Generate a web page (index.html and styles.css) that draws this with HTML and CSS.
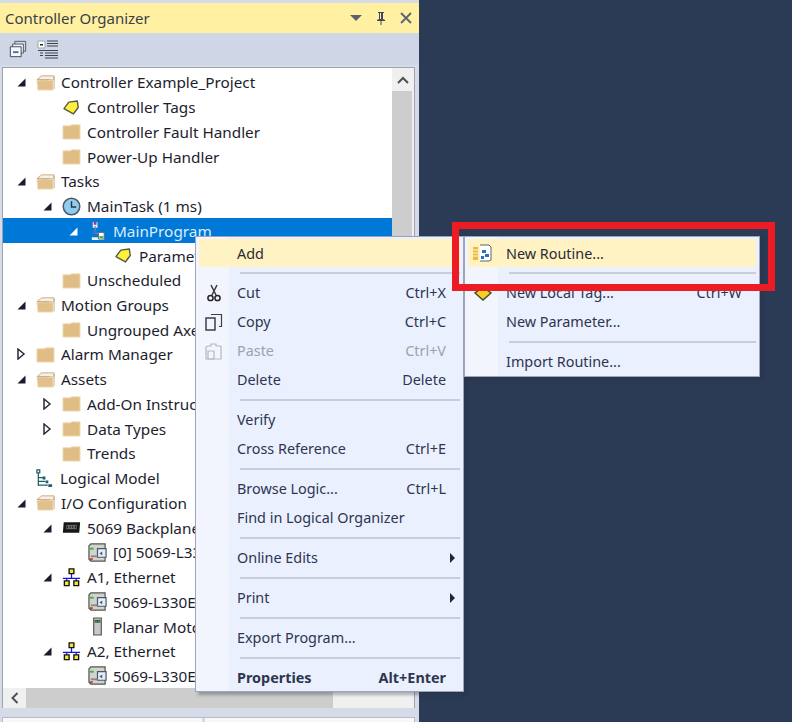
FILE: index.html
```html
<!DOCTYPE html>
<html lang="en">
<head>
<meta charset="utf-8">
<title>Controller Organizer</title>
<link rel="stylesheet" href="styles.css">
</head>
<body>
<svg class="defs" width="0" height="0" aria-hidden="true">
  <defs>
    <symbol id="folder" viewBox="0 0 20 20"><path d="M1 4h8l1-1h9v15H1z" fill="#e0bd85" stroke="#f0dcb8" stroke-width="1"/></symbol>
    <symbol id="folder-open" viewBox="0 0 20 20"><path d="M1 7l5-4h13v4z" fill="#f6f1e8" stroke="#c9ab7c"/><path d="M19 4v13" stroke="#b9a98c" fill="none"/><path d="M1 8h12l5-1v11H2z" fill="#e2c08b" stroke="#efdcba"/><path d="M1 7c5 0 9 1 13 0" stroke="#c9ab7c" fill="none"/></symbol>
    <symbol id="tag" viewBox="0 0 20 20"><path d="M2 10l6-6h9v7l-6 6z" transform="rotate(-8 10 10)" fill="#fff03c" stroke="#5a5a48" stroke-width="1.5" stroke-linejoin="round"/></symbol>
    <symbol id="clock" viewBox="0 0 20 20"><circle cx="10" cy="10" r="8.7" fill="#8fcdf0" stroke="#4e5a66" stroke-width="1.6"/><path d="M10 4.5V10.500H15" fill="none" stroke="#2b3440" stroke-width="1.500"/></symbol>
    <symbol id="program" viewBox="0 0 20 20"><path d="M5 1h5v6H5zM4 17h13v3H4z" fill="#eef2f6"/><path d="M6 1h3v3H6z" fill="#a03a90"/><path d="M7.500 5v8h5" fill="none" stroke="#7a8a9a" stroke-width="1.300"/><path d="M4 10h4v4H4z" fill="#2b74c8"/><path d="M11 12h6v7h-6z" fill="#fff" stroke="#5c6a70"/><path d="M12 16h4v2h-4z" fill="#3aa84a"/></symbol>
    <symbol id="network" viewBox="0 0 20 20"><path d="M10 6v5M1 11h18M5 11v3M15 11v3" stroke="#1414e0" stroke-width="1.300" fill="none"/><path d="M7.500 1h5v5h-5zM2.500 13.500h5v5h-5zM12.500 13.500h5v5h-5z" fill="#f5e83a" stroke="#111" stroke-width="1.400"/></symbol>
    <symbol id="backplane" viewBox="0 0 22 14"><path d="M2 1h19l-1 12H1z" fill="#161616"/><path d="M5 4h12v5H5z" fill="#6d6d6d"/><path d="M6 5h1v3H6zM9 5h1v3H9zM12 5h1v3h-1zM15 5h1v3h-1z" fill="#111"/></symbol>
    <symbol id="module" viewBox="0 0 20 20"><path d="M1 3l2-2h15v18H3l-2-2z" fill="#d2d2d0" stroke="#55554f" stroke-width="1.300"/><path d="M2 5h4v2H2z" fill="#2fc030"/><path d="M2 16h3v2H2z" fill="#d83a20"/><path d="M10 6h9v9h-9z" fill="#e8eef6" stroke="#4f5a60" stroke-width="1.300"/><path d="M15 9l-3 2 3 2z" fill="#3658a8"/><path d="M3 13h7v2H3z" fill="#8a8a88"/></symbol>
    <symbol id="drive" viewBox="0 0 10 20"><path d="M1 1h8v18H1z" fill="#c8c8c6" stroke="#55554f" stroke-width="1.200"/><path d="M2 3h6v3H2z" fill="#2f5a46"/><path d="M3 4h1v1H3zM6 4h1v1H6z" fill="#5fe060"/></symbol>
    <symbol id="open" viewBox="0 0 10 10"><path d="M9.500 1.500V9.500H1.500z"/></symbol>
    <symbol id="closed" viewBox="0 0 10 12"><path d="M2 1l6 5-6 5z" fill="none" stroke="#2a2a3a" stroke-width="1.500"/></symbol>
  </defs>
</svg>

<section class="organizer">
  <header class="titlebar">
    <h1>Controller Organizer</h1>
    <div class="window-tools">
      <svg class="tool-icon" viewBox="0 0 14 14"><path d="M1 4h12L7 10z" fill="#5b6270"/></svg>
      <svg class="tool-icon" viewBox="0 0 14 14"><path d="M4 1h6v1H9v6l2 1v1H7.500v4h-1v-4H3V9l2-1V2H4zM6 2v6h1V2z" fill="#40485a"/></svg>
      <svg class="tool-icon" viewBox="0 0 14 14"><path d="M2 2l10 10M12 2L2 12" stroke="#5b6270" stroke-width="1.800" fill="none"/></svg>
    </div>
  </header>
  <div class="toolbar">
    <svg class="bar-icon" viewBox="0 0 20 20"><path d="M6.500 4.500V1.500h12v11h-3" fill="none" stroke="#4a4f5c"/><path d="M4 7.500V4.500h12v10h-3" fill="#eef1f6" stroke="#4a4f5c"/><path d="M1.500 7.500h12v11h-12z" fill="#f4f6fa" stroke="#3a3f4c"/><path d="M4.500 12.500h6v2h-6z" fill="#3a6ea8"/></svg>
    <svg class="bar-icon wide" viewBox="0 0 22 20"><path d="M1 2h7v7H1z" fill="#fff" stroke="#9aa" /><path d="M3 5h3v1.500H3z" fill="#223"/><path d="M10 2h11M10 4.500h11M10 7h11M1 11.500h20M8 14h13M8 16.500h13M8 19h13M3 14h3M3 16.500h3" stroke="#3e4350" fill="none"/></svg>
  </div>

  <div class="tree-frame">
    <div class="tree-view">
      <ul class="tree">
        <li class="node l0"><svg class="twist"><use href="#open"/></svg><svg class="ico"><use href="#folder-open"/></svg><span>Controller Example_Project</span></li>
        <li class="node l1 leaf"><svg class="ico"><use href="#tag"/></svg><span>Controller Tags</span></li>
        <li class="node l1 leaf"><svg class="ico"><use href="#folder"/></svg><span>Controller Fault Handler</span></li>
        <li class="node l1 leaf"><svg class="ico"><use href="#folder"/></svg><span>Power-Up Handler</span></li>
        <li class="node l0"><svg class="twist"><use href="#open"/></svg><svg class="ico"><use href="#folder-open"/></svg><span>Tasks</span></li>
        <li class="node l1"><svg class="twist"><use href="#open"/></svg><svg class="ico"><use href="#clock"/></svg><span>MainTask (1 ms)</span></li>
        <li class="node l2 selected"><svg class="twist"><use href="#open"/></svg><svg class="ico"><use href="#program"/></svg><span>MainProgram</span></li>
        <li class="node l3 leaf"><svg class="ico"><use href="#tag"/></svg><span>Parameters</span></li>
        <li class="node l1 leaf"><svg class="ico"><use href="#folder"/></svg><span>Unscheduled</span></li>
        <li class="node l0"><svg class="twist"><use href="#open"/></svg><svg class="ico"><use href="#folder-open"/></svg><span>Motion Groups</span></li>
        <li class="node l1 leaf"><svg class="ico"><use href="#folder"/></svg><span>Ungrouped Axes</span></li>
        <li class="node l0"><svg class="twist shut"><use href="#closed"/></svg><svg class="ico"><use href="#folder"/></svg><span>Alarm Manager</span></li>
        <li class="node l0"><svg class="twist"><use href="#open"/></svg><svg class="ico"><use href="#folder-open"/></svg><span>Assets</span></li>
        <li class="node l1"><svg class="twist shut"><use href="#closed"/></svg><svg class="ico"><use href="#folder"/></svg><span>Add-On Instructions</span></li>
        <li class="node l1"><svg class="twist shut"><use href="#closed"/></svg><svg class="ico"><use href="#folder"/></svg><span>Data Types</span></li>
        <li class="node l1 leaf"><svg class="ico"><use href="#folder"/></svg><span>Trends</span></li>
        <li class="node l0 leaf"><svg class="ico" viewBox="0 0 20 20"><path d="M2 1h3v3H2zM3.500 4v14M3.500 9h5M3.500 13h7M3.500 17h10" stroke="#1f5f6a" stroke-width="1.300" fill="none"/><path d="M8 8h3v3H8zM11 12h3v3h-3zM14 16h4v3h-4z" fill="#1f5f6a"/></svg><span>Logical Model</span></li>
        <li class="node l0"><svg class="twist"><use href="#open"/></svg><svg class="ico"><use href="#folder-open"/></svg><span>I/O Configuration</span></li>
        <li class="node l1"><svg class="twist"><use href="#open"/></svg><svg class="ico"><use href="#backplane"/></svg><span>5069 Backplane</span></li>
        <li class="node l2 leaf"><svg class="ico"><use href="#module"/></svg><span>[0] 5069-L330ERMS2</span></li>
        <li class="node l1"><svg class="twist"><use href="#open"/></svg><svg class="ico"><use href="#network"/></svg><span>A1, Ethernet</span></li>
        <li class="node l2 leaf"><svg class="ico"><use href="#module"/></svg><span>5069-L330ERMS2</span></li>
        <li class="node l2 leaf"><svg class="ico"><use href="#drive"/></svg><span>Planar Motor</span></li>
        <li class="node l1"><svg class="twist"><use href="#open"/></svg><svg class="ico"><use href="#network"/></svg><span>A2, Ethernet</span></li>
        <li class="node l2 leaf"><svg class="ico"><use href="#module"/></svg><span>5069-L330ERMS2</span></li>
      </ul>
      <div class="vscroll">
        <button class="sbtn" type="button"><svg viewBox="0 0 12 8"><path d="M1 7l5-5 5 5" fill="none" stroke="#505050" stroke-width="2"/></svg></button>
        <div class="vthumb"></div>
      </div>
    </div>
    <div class="hscroll">
      <button class="sbtn" type="button"><svg viewBox="0 0 8 12"><path d="M7 1L2 6l5 5" fill="none" stroke="#505050" stroke-width="2"/></svg></button>
      <div class="hthumb"></div>
    </div>
  </div>

  <div class="description">
    <div class="desc-label">Description</div>
    <div class="desc-value"></div>
  </div>
</section>

<nav class="menu main-menu">
  <div class="item hot"><span>Add</span></div>
  <hr>
  <div class="item"><svg class="micon" viewBox="0 0 16 18"><path d="M5 1l5 10M11 1L6 11" stroke="#3a3a3a" stroke-width="1.500" fill="none"/><circle cx="4.500" cy="14" r="2.600" fill="none" stroke="#222" stroke-width="1.500"/><circle cx="11.500" cy="14" r="2.600" fill="none" stroke="#222" stroke-width="1.500"/></svg><span>Cut</span><kbd>Ctrl+X</kbd></div>
  <div class="item"><svg class="micon" viewBox="0 0 18 18"><path d="M6 1.500h10.500v12H14" fill="none" stroke="#3a3f4c" stroke-width="1.200"/><path d="M1 5h9v12H1z" fill="none" stroke="#3a3f4c" stroke-width="1.500"/></svg><span>Copy</span><kbd>Ctrl+C</kbd></div>
  <div class="item off"><svg class="micon" viewBox="0 0 18 18"><path d="M3 4h3V2h5v2h5v13H1V5z" fill="none" stroke="#b4b8c0" stroke-width="1.200"/><path d="M3 9h6v8H3z" fill="none" stroke="#b4b8c0" stroke-width="1.200"/></svg><span>Paste</span><kbd>Ctrl+V</kbd></div>
  <div class="item"><span>Delete</span><kbd>Delete</kbd></div>
  <hr>
  <div class="item"><span>Verify</span></div>
  <div class="item"><span>Cross Reference</span><kbd>Ctrl+E</kbd></div>
  <hr>
  <div class="item"><span>Browse Logic...</span><kbd>Ctrl+L</kbd></div>
  <div class="item"><span>Find in Logical Organizer</span></div>
  <hr>
  <div class="item"><span>Online Edits</span><i class="arrow"></i></div>
  <hr>
  <div class="item"><span>Print</span><i class="arrow"></i></div>
  <hr>
  <div class="item"><span>Export Program...</span></div>
  <hr>
  <div class="item strong"><span>Properties</span><kbd>Alt+Enter</kbd></div>
</nav>

<nav class="menu sub-menu">
  <div class="item hot"><svg class="micon routine" viewBox="0 0 22 20"><path d="M2 4h5v13H2z" fill="#f0b83c"/><path d="M2 7h5M2 10h5M2 13h5" stroke="#fff4d8"/><path d="M9 2h9l2 2v13l-2 1H9" fill="#fff" stroke="#5a6270"/><path d="M11 7h4v3h-4zM14 11h4v3h-4zM10 13h3v3h-3z" fill="#2a6ebc"/></svg><span>New Routine...</span></div>
  <hr>
  <div class="item"><svg class="micon" viewBox="0 0 18 18"><path d="M9 3l8 6-8 7-8-7z" fill="#f5d020" stroke="#4a4636" stroke-width="1.500"/></svg><span>New Local Tag...</span><kbd>Ctrl+W</kbd></div>
  <div class="item"><span>New Parameter...</span></div>
  <hr>
  <div class="item"><span>Import Routine...</span></div>
</nav>

<div class="callout"></div>
</body>
</html>
```
FILE: styles.css
```css
* { box-sizing: border-box; }
html, body { margin: 0; height: 100%; }
body {
  position: relative;
  height: 722px;
  overflow: hidden;
  background: #2b3a55;
  font-family: "Noto Sans", "Open Sans", sans-serif;
  color: #1d1d2e;
}
.defs { position: absolute; }

.organizer {
  width: 419px;
  height: 722px;
  display: flex;
  flex-direction: column;
  background: #d6dbe8;
  padding-top: 3px;
  overflow: hidden;
}
.titlebar {
  flex: 0 0 30px;
  display: flex;
  align-items: center;
  justify-content: space-between;
  padding: 0 6px 0 5px;
  background: #fff0a2;
}
.titlebar h1 {
  margin: 0;
  font-size: 15px;
  font-weight: 400;
  color: #3a4048;
}
.window-tools { display: flex; gap: 11px; align-items: center; }
.tool-icon { width: 14px; height: 14px; }
.toolbar {
  flex: 0 0 32px;
  display: flex;
  align-items: center;
  gap: 10px;
  padding: 0 0 0 9px;
  background: #cfd6e5;
}
.bar-icon { width: 18px; height: 18px; }
.bar-icon.wide { width: 22px; height: 20px; }

.tree-frame {
  margin: 2px 4px 0 2px;
  flex: 0 0 630px;
  display: flex;
  flex-direction: column;
  border: 1px solid #9fa4ac;
  border-bottom: 0;
  background: #fff;
}
.tree-view { flex: 1; display: flex; min-height: 0; overflow: hidden; }
.tree {
  flex: 1;
  min-width: 0;
  margin: 0;
  padding: 2px 0 0;
  list-style: none;
  overflow: hidden;
  background: #fff;
}
.node {
  height: 24.74px;
  display: flex;
  align-items: center;
  font-size: 15.3px;
  white-space: nowrap;
  color: #1d1d2e;
}
.node .twist { flex: 0 0 10px; width: 10px; height: 10px; margin-right: 10px; fill: #1a1a30; }
.node .twist.shut { height: 12px; }
.node .ico { flex: 0 0 19px; width: 19px; height: 19px; margin-right: 6px; }
.l0 { padding-left: 13px; }
.l1 { padding-left: 39px; }
.l2 { padding-left: 65px; }
.l3 { padding-left: 91px; }
.leaf { padding-left: 32px; }
.l1.leaf { padding-left: 59px; }
.l2.leaf { padding-left: 85px; }
.l3.leaf { padding-left: 111px; }
.selected { background: #0078d7; color: #dcecfb; }
.selected .twist { fill: #fff; }

.vscroll { flex: 0 0 22px; margin-right: 0; background: #f0f0f0; display: flex; flex-direction: column; }
.vthumb { flex: 1; margin: 0 2px 0 0; background: #cdcdcd; }
.sbtn { display: flex; align-items: center; justify-content: center; padding: 0; border: 0; background: #f0f0f0; }
.vscroll .sbtn { flex: 0 0 23px; }
.vscroll .sbtn svg { width: 12px; height: 8px; }
.hscroll { flex: 0 0 20px; display: flex; background: #f0f0f0; }
.hscroll .sbtn { flex: 0 0 23px; }
.hscroll .sbtn svg { width: 9px; height: 12px; }
.hthumb { flex: 0 0 307px; background: #cdcdcd; }

.description {
  margin: 9px 4px 0 2px;
  flex: 1;
  display: flex;
  background: #fff;
  border: 1px solid #b8bcc6;
}
.desc-label { flex: 0 0 202px; padding-left: 5px; font-size: 15px; line-height: 20px; color: #333; border-right: 3px solid #d6dbe8; background: #f8f8f8; }
.desc-value { flex: 1; background: #f8f8f8; }

.menu {
  position: absolute;
  padding: 2px 3px;
  background: linear-gradient(to right, #f2f5fe 0 33px, #eaf0fe 33px);
  border: 1px solid #9ba6bc;
  box-shadow: 3px 3px 3px rgba(40, 45, 60, .35);
  font-size: 14.4px;
  color: #2e3550;
}
.main-menu { left: 195px; top: 236px; width: 269px; height: 456px; }
.sub-menu { left: 464px; top: 236px; width: 296px; height: 141px; }
.item {
  height: 29px;
  display: flex;
  align-items: center;
  padding: 0 14px 0 38px;
  position: relative;
  white-space: nowrap;
}
.item span { flex: 1; }
.item kbd { font: inherit; }
.hot { height: 28px; background: #fff3c4; color: #2a2a36; }
.off { color: #9da2aa; }
.strong { font-weight: 700; }
.menu hr { height: 2px; margin: 4.500px 0 4.500px 41px; border: 0; background: #c8cdd9; }
.sub-menu .item { padding-left: 38px; }
.micon { position: absolute; left: 6px; top: 6px; width: 18px; height: 18px; }
.micon.routine { width: 22px; height: 20px; left: 3px; top: 4px; }
.arrow { width: 0; height: 0; margin-right: -9px; border-left: 5px solid #1e2438; border-top: 5px solid transparent; border-bottom: 5px solid transparent; }

.callout {
  position: absolute;
  left: 452px;
  top: 222px;
  width: 323px;
  height: 69px;
  border: 7px solid #ed1c24;
}
```
